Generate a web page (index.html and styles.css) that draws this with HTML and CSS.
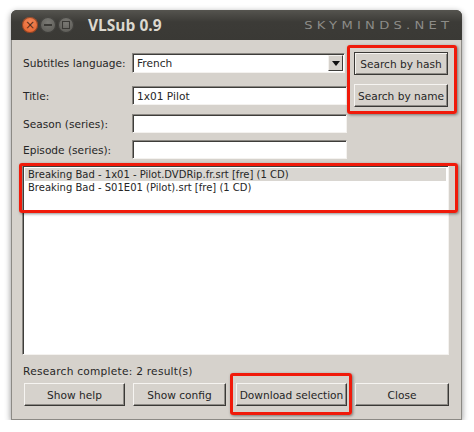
FILE: index.html
```html
<!DOCTYPE html>
<html lang="en">
<head>
    <meta charset="UTF-8">
    <meta name="viewport" content="width=device-width, initial-scale=1.0">
    <title>VLSub 0.9</title>

    <link rel="stylesheet" href="styles.css">
</head>
<body>
    <div class="window">
        <div class="titlebar">
            <span class="wbtn close">&#215;</span>
            <span class="wbtn mini"><i class="bar"></i></span>
            <span class="wbtn maxi"><i class="sq"></i></span>
            <span class="title">VLSub 0.9</span>
            <span class="mark">SKYMINDS.NET</span>
        </div>
        <div class="content">
            <div class="top">
                <div class="form">
                    <div class="row first">
                        <label>Subtitles language:</label>
                        <div class="combo">
                            <span class="value">French</span>
                            <span class="arrow"></span>
                        </div>
                    </div>
                    <div class="row r2">
                        <label>Title:</label>
                        <input type="text" class="field" value="1x01 Pilot">
                    </div>
                    <div class="row r3">
                        <label>Season (series):</label>
                        <input type="text" class="field">
                    </div>
                    <div class="row r4">
                        <label>Episode (series):</label>
                        <input type="text" class="field">
                    </div>
                </div>
                <div class="search-group">
                    <button class="btn default">Search by hash</button>
                    <button class="btn">Search by name</button>
                </div>
            </div>

            <div class="list">
                <div class="item selected">Breaking Bad - 1x01 - Pilot.DVDRip.fr.srt [fre] (1 CD)</div>
                <div class="item">Breaking Bad - S01E01 (Pilot).srt [fre] (1 CD)</div>
                <div class="hl list-hl"></div>
            </div>

            <p class="status">Research complete: 2 result(s)</p>

            <div class="actions">
                <button class="btn help">Show help</button>
                <button class="btn config">Show config</button>
                <span class="dl-wrap">
                    <button class="btn download">Download selection</button>
                    <span class="hl dl-hl"></span>
                </span>
                <button class="btn closebtn">Close</button>
            </div>
        </div>
    </div>
</body>
</html>
```

FILE: styles.css
```css
*{
    margin: 0;
    padding: 0;
    box-sizing: border-box;
}
body
{
    background-color: #ffffff;
    font-family: "DejaVu Sans", sans-serif;
    font-size: 10.6px;
    color: #262626;
}
.window
{
    width: 451px;
    height: 410px;
    margin: 10px 0 0 11px;
    border-radius: 6px 6px 0 0;
    display: flex;
    flex-direction: column;
    box-shadow: 0 2px 6px rgba(0, 0, 0, 0.45);
    background: #3c3b37;
}

/* title bar */
.titlebar
{
    height: 30px;
    display: flex;
    align-items: center;
    padding: 0 9px 0 11px;
    border-radius: 6px 6px 0 0;
    background: linear-gradient(#55544f, #3c3b37 40%, #3a3935);
}
.wbtn
{
    width: 16px;
    height: 16px;
    border-radius: 50%;
    margin-right: 2px;
    display: flex;
    align-items: center;
    justify-content: center;
    background: radial-gradient(circle at 50% 35%, #7a7974, #55544f);
    box-shadow: inset 0 0 0 1px rgba(0, 0, 0, 0.35);
}
.wbtn.close
{
    background: radial-gradient(circle at 50% 35%, #f3895a, #e05a24);
    color: #5a2a14;
    font-size: 12px;
    line-height: 16px;
}
.wbtn .bar
{
    width: 8px;
    height: 2px;
    background: #3a3935;
}
.wbtn .sq
{
    width: 8px;
    height: 8px;
    border: 1.5px solid #3a3935;
}
.title
{
    margin-left: 12px;
    font-family: "Open Sans", sans-serif;
    font-weight: 700;
    font-size: 15.5px;
    color: #dcd8cf;
}
.mark
{
    margin-left: auto;
    display: inline-block;
    font-size: 10.5px;
    letter-spacing: 3.4px;
    color: #8d8c88;
    transform: scaleX(1.25);
    transform-origin: right center;
}

/* dialog body */
.content
{
    flex: 1;
    background: #d6d2cc;
    border: 1px solid #8c8a85;
    border-top: 0;
    padding: 5px 0 0 11px;
}
.top
{
    display: flex;
    align-items: flex-start;
}
.form
{
    width: 324px;
    margin-top: 8px;
}
.row
{
    display: flex;
    align-items: center;
    height: 19px;
}
.row.first
{
    height: 20px;
}
.r2
{
    margin-top: 13px;
}
.r3
{
    margin-top: 9px;
}
.r4
{
    margin-top: 7px;
}
.row label
{
    width: 109px;
}
.field, .combo
{
    height: 100%;
    background: #ffffff;
    border: 1px solid;
    border-color: #8a8782 #f4f2ef #f4f2ef #8a8782;
    box-shadow: inset 1px 1px 0 #3e3d3a;
    font-family: "DejaVu Sans", sans-serif;
    font-size: 10.6px;
    color: #262626;
    padding: 0 4px;
    outline: 0;
}
.field
{
    width: 215px;
}
.combo
{
    width: 213px;
    display: flex;
    align-items: center;
    padding-right: 1px;
}
.combo .value
{
    flex: 1;
}
.combo .arrow
{
    width: 15px;
    height: 16px;
    background: #d6d2cc;
    border: 1px solid;
    border-color: #f4f2ef #3e3d3a #3e3d3a #f4f2ef;
    position: relative;
}
.combo .arrow::after
{
    content: "";
    position: absolute;
    left: 3px;
    top: 5px;
    border-left: 4px solid transparent;
    border-right: 4px solid transparent;
    border-top: 5px solid #111;
}

/* buttons */
.btn
{
    height: 23px;
    background: #d6d2cc;
    border: 1px solid;
    border-color: #f6f4f1 #3a3936 #3a3936 #f6f4f1;
    box-shadow: inset -1px -1px 0 #8e8b86;
    font-family: "DejaVu Sans", sans-serif;
    font-size: 10.6px;
    color: #262626;
    cursor: pointer;
}
.btn.default
{
    border-color: #3a3936;
    box-shadow: inset 1px 1px 0 #f6f4f1, inset -1px -1px 0 #8e8b86;
}
.search-group
{
    display: flex;
    flex-direction: column;
    gap: 9px;
    border: 3px solid #f01a0a;
    border-radius: 3px;
    padding: 4px 6px 4px 4px;
    box-shadow: 1px 1px 3px rgba(0, 0, 0, 0.45);
}
.search-group .btn
{
    width: 94px;
}

/* result list */
.list
{
    position: relative;
    margin: 6px 0 0 -1px;
    width: 427px;
    height: 190px;
    background: #ffffff;
    border: 1px solid;
    border-color: #8a8782 #f4f2ef #f4f2ef #8a8782;
    box-shadow: inset 1px 1px 0 #3e3d3a;
    padding: 2px 2px 0 2px;
}
.item
{
    height: 13px;
    line-height: 13px;
    padding-left: 3px;
    font-size: 10px;
    white-space: nowrap;
}
.item.selected
{
    background: #d9d6d1;
}
.hl
{
    position: absolute;
    border: 3px solid #f01a0a;
    border-radius: 3px;
    box-shadow: 1px 1px 3px rgba(0, 0, 0, 0.45);
    pointer-events: none;
}
.list-hl
{
    left: -4px;
    top: -3px;
    width: 439px;
    height: 50px;
}

.status
{
    margin-top: 9px;
    line-height: 14px;
    letter-spacing: 0.25px;
}

.actions
{
    display: flex;
    margin-top: 5px;
}
.help
{
    width: 101px;
    margin-left: 1px;
}
.config
{
    width: 93px;
    margin-left: 8px;
}
.dl-wrap
{
    position: relative;
    margin-left: 10px;
}
.download
{
    width: 111px;
}
.dl-hl
{
    left: -6px;
    top: -10px;
    right: -5px;
    bottom: -9px;
}
.closebtn
{
    width: 94px;
    margin-left: 8px;
}
```
